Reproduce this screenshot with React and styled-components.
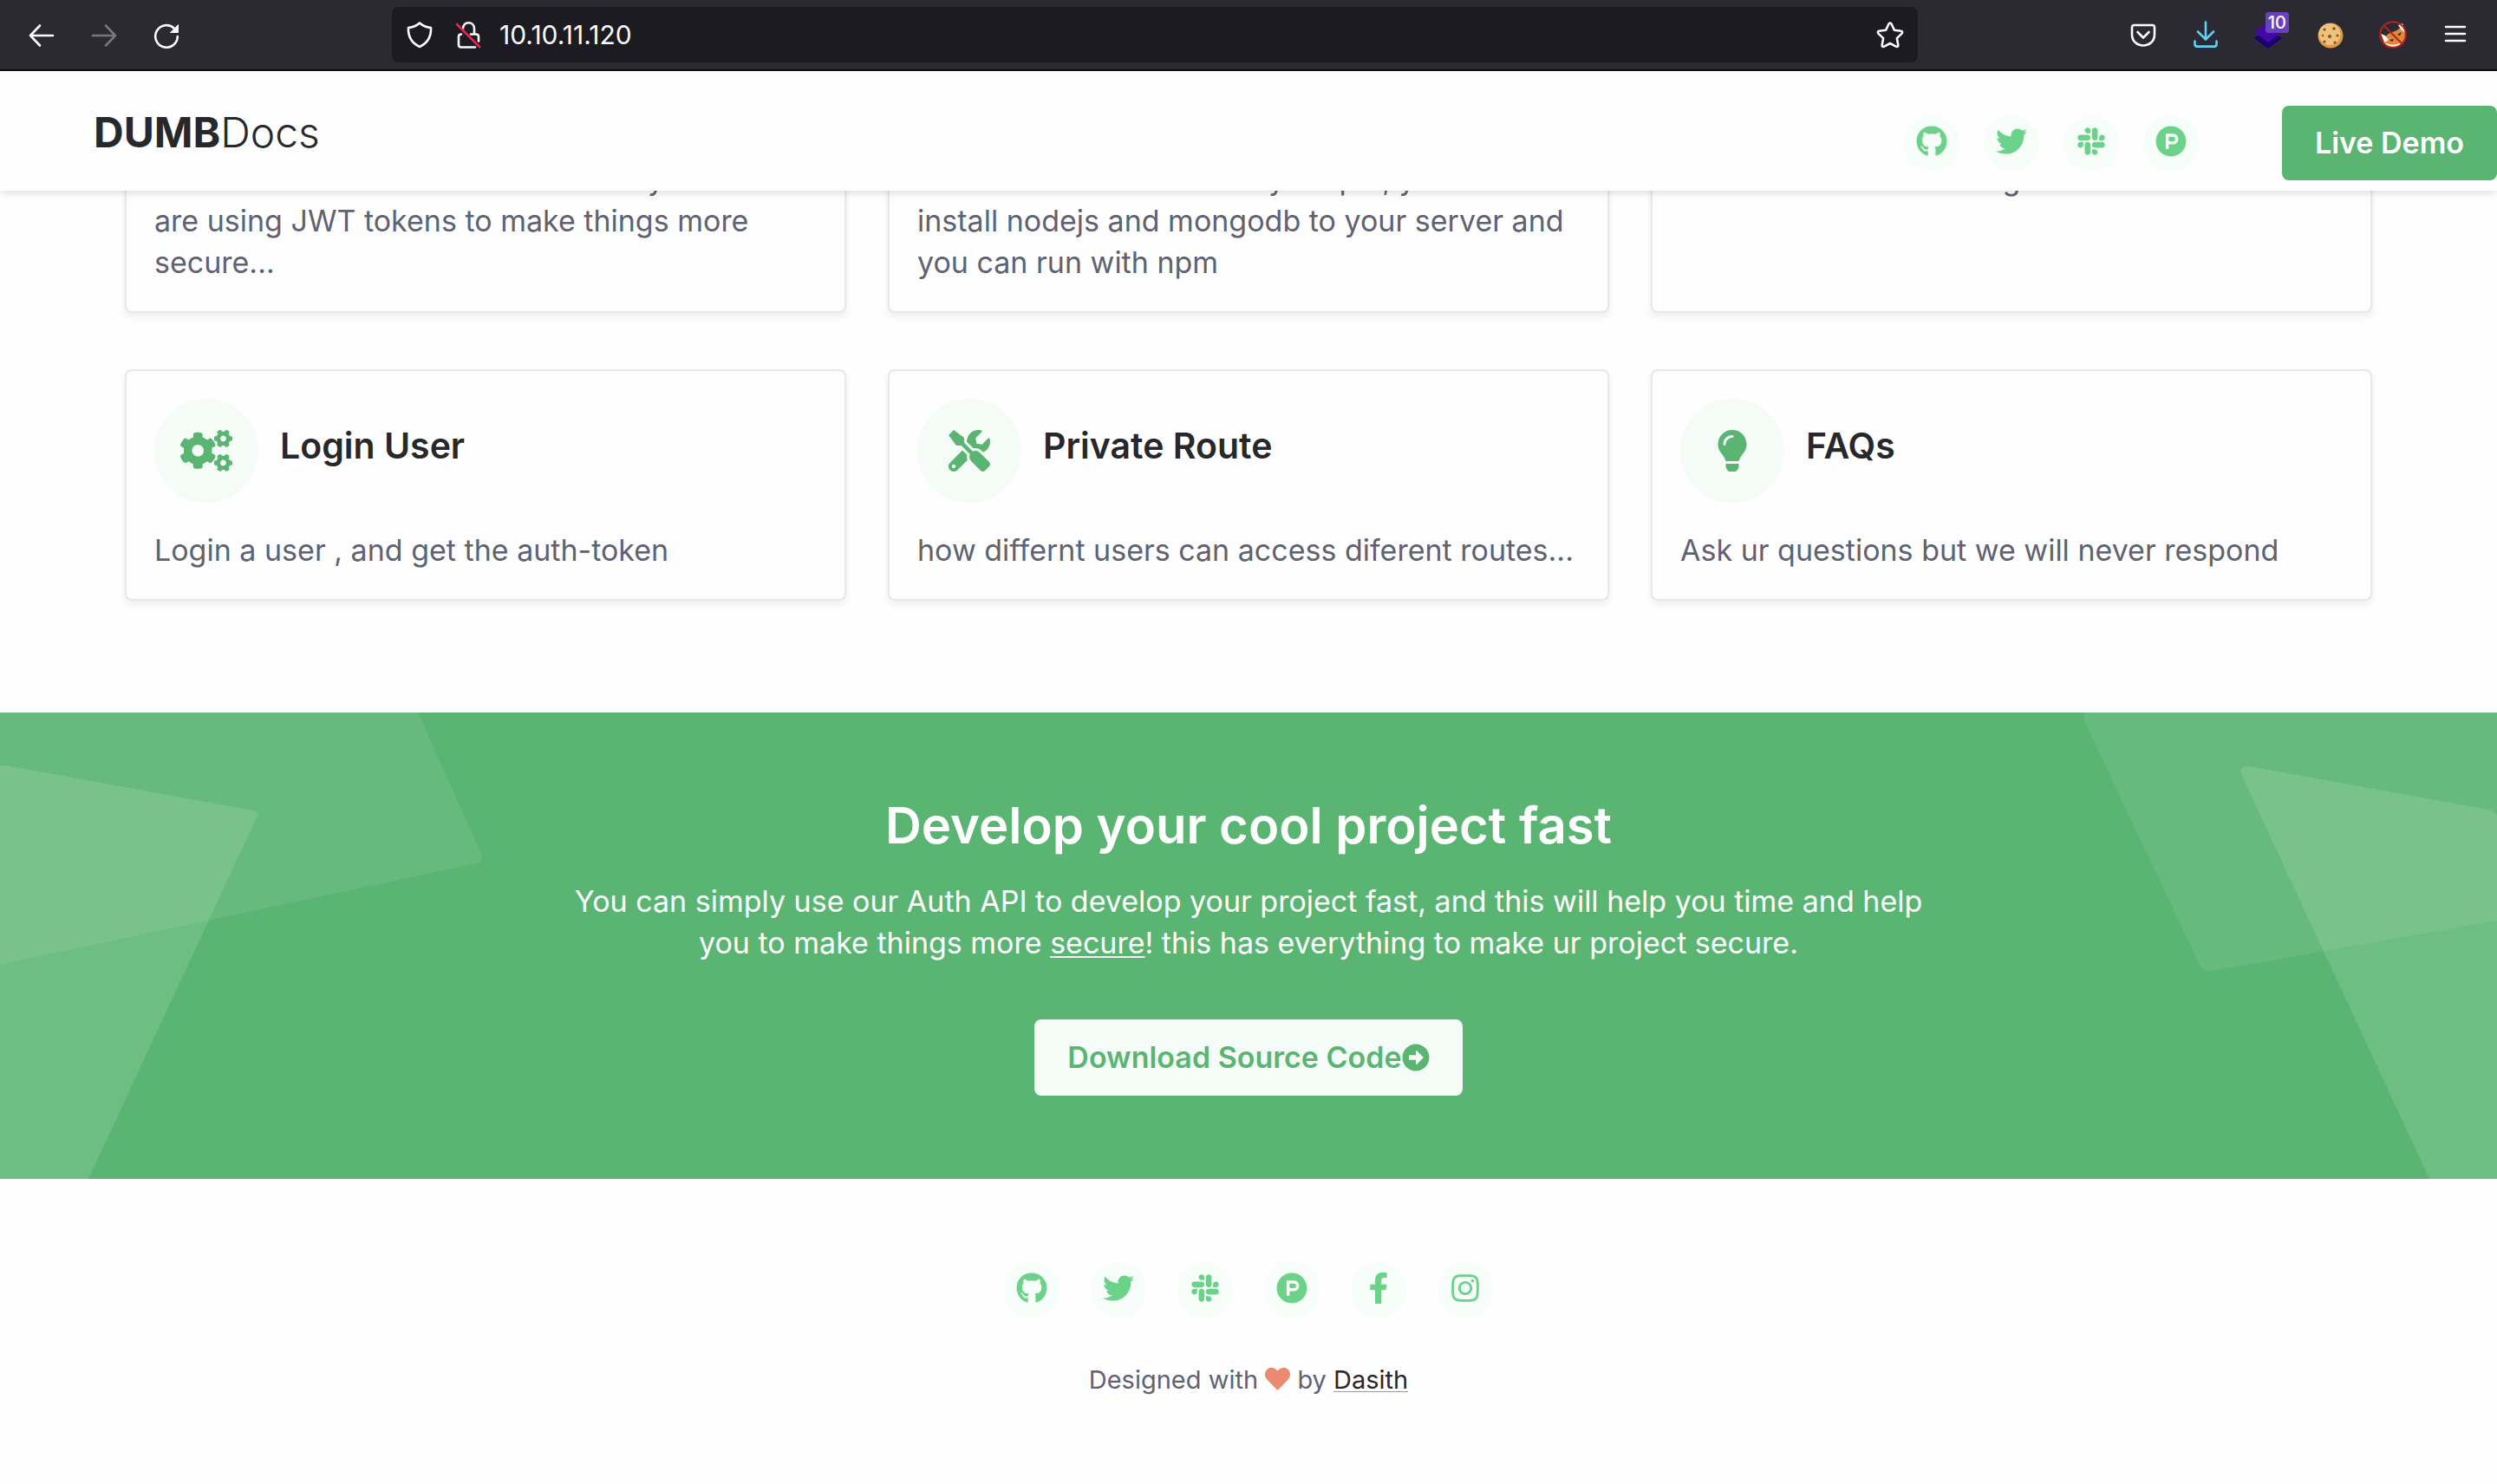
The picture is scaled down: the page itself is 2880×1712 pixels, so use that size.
import React from "react";
import styled, { createGlobalStyle } from "styled-components";
import {
  FaGithub,
  FaTwitter,
  FaSlack,
  FaProductHunt,
  FaFacebookF,
  FaInstagram,
  FaCogs,
  FaTools,
  FaLightbulb,
  FaHeart,
  FaArrowAltCircleRight,
} from "react-icons/fa";

const GlobalStyle = createGlobalStyle`
  *, *::before, *::after { box-sizing: border-box; }
  html { background: #fefefe; }
  body {
    margin: 0;
    overflow-x: hidden;
    color: #5f6271;
    background: #fefefe;
    font-family: Inter, "Open Sans", "Liberation Sans", sans-serif;
    font-size: 34px;
    line-height: 48px;
  }
  h1, h2, h3, p, ul { margin: 0; padding: 0; }
  a { color: inherit; text-decoration: none; }
  button { font: inherit; border: 0; padding: 0; background: none; cursor: pointer; }
`;

const Toolbar = styled.div`
  display: flex;
  align-items: center;
  height: 82px;
  padding: 0 12px;
  background: #2b2a33;
  border-bottom: 2px solid #0c0c0d;
`;

const ToolButton = styled.button`
  position: relative;
  display: grid;
  place-items: center;
  width: ${(p) => (p.$small ? 56 : 72)}px;
  height: 64px;
  flex: none;
  color: ${(p) => p.$tone || "#fbfbfe"};
`;

const AddressBar = styled.div`
  display: flex;
  align-items: center;
  flex: 1;
  min-width: 0;
  height: 64px;
  margin: 0 224px;
  padding: 0 4px;
  border-radius: 8px;
  background: #1c1b22;
`;

const AddressInput = styled.input`
  flex: 1;
  min-width: 0;
  padding: 0 8px;
  border: 0;
  outline: 0;
  background: transparent;
  color: #fbfbfe;
  font: 400 30px/40px Inter, sans-serif;
`;

const Badge = styled.span`
  position: absolute;
  top: 6px;
  right: 12px;
  padding: 0 3px;
  border-radius: 3px;
  background: #6a3fc0;
  color: #fff;
  font: 500 20px/24px Inter, sans-serif;
`;

const Header = styled.header`
  position: relative;
  z-index: 2;
  display: flex;
  align-items: center;
  justify-content: space-between;
  height: 138px;
  padding: 28px 0 0 108px;
  background: #fefefe;
  box-shadow: 0 2px 10px rgba(0, 0, 0, 0.14);
`;

const Logo = styled.a`
  margin-bottom: 24px;
  color: #26282b;
  font-size: 48px;
  line-height: 60px;
  font-weight: 700;
`;

const LogoLight = styled.span`
  font-weight: 300;
`;

const HeaderActions = styled.div`
  display: flex;
  align-items: center;
  gap: 96px;
`;

const SocialList = styled.ul`
  display: flex;
  gap: ${(p) => p.$gap}px;
  list-style: none;
`;

const SocialLink = styled.a`
  display: grid;
  place-items: center;
  width: 64px;
  height: 64px;
  padding-bottom: 4px;
  border-radius: 50%;
  background: #f7fdf9;
  color: #6cd28a;
  font-size: 36px;
`;

const Button = styled.a`
  display: inline-flex;
  align-items: center;
  height: ${(p) => (p.$light ? 88 : 86)}px;
  padding: 0 38px;
  border-radius: 8px;
  background: ${(p) => (p.$light ? "#f5fcf7" : "#5bb572")};
  color: ${(p) => (p.$light ? "#5bb572" : "#fff")};
  font-weight: 600;

  svg {
    width: 32px;
    height: 32px;
  }
`;

const Features = styled.main`
  display: grid;
  grid-template-columns: repeat(3, 1fr);
  gap: 65px 48px;
  margin-top: -71px;
  padding: 0 5% 129px;
`;

const Card = styled.article`
  padding: 32px;
  border: 2px solid #e8e8e9;
  border-radius: 8px;
  background: #fefefe;
  box-shadow: 0 4px 8px rgba(0, 0, 0, 0.07);
`;

const CardHead = styled.div`
  display: flex;
  align-items: center;
  gap: 25px;
  margin-bottom: 31px;
`;

const CardIcon = styled.span`
  display: grid;
  place-items: center;
  width: 120px;
  height: 120px;
  border-radius: 50%;
  background: #f5fcf7;
  color: #5bb572;
`;

const CardTitle = styled.h3`
  padding-bottom: 12px;
  color: #26282b;
  font-size: 41px;
  line-height: 48px;
  font-weight: 600;
`;

const Line = styled.span`
  display: block;
  white-space: nowrap;
`;

const Banner = styled.section`
  position: relative;
  padding: 96px 0;
  overflow: hidden;
  background: #5bb572;
  color: #fff;
  text-align: center;
`;

const Shapes = styled.svg`
  position: absolute;
  top: 0;
  ${(p) => p.$side}: 0;
`;

const BannerTitle = styled.h2`
  margin-bottom: 30px;
  font-size: 58px;
  line-height: 68px;
  font-weight: 600;
`;

const BannerText = styled.p`
  margin-bottom: 64px;
`;

const Underlined = styled.a`
  text-decoration: underline;
  text-decoration-thickness: 2px;
  text-underline-offset: 3px;
`;

const Actions = styled.div`
  display: flex;
  justify-content: center;
`;

const Footer = styled.footer`
  display: flex;
  flex-direction: column;
  align-items: center;
  gap: 50px;
  padding: 96px 0;
`;

const Credit = styled.small`
  font-size: 29px;
  line-height: 44px;
`;

const Heart = styled(FaHeart)`
  color: #ea8a70;
  vertical-align: -3px;
`;

const Author = styled.a`
  color: #26282b;
  text-decoration: underline 1px #9a9ca3;
  text-underline-offset: 3px;
`;

const Svg = ({ children, size = 32, ...rest }) => (
  <svg
    width={size}
    height={size}
    viewBox="0 0 32 32"
    fill="none"
    stroke="currentColor"
    strokeWidth="2.6"
    strokeLinecap="round"
    strokeLinejoin="round"
    aria-hidden="true"
    {...rest}
  >
    {children}
  </svg>
);

const BackIcon = () => <Svg><path d="M29 17H3.500M14 5.500 3 17l11 11.500" /></Svg>;
const ForwardIcon = () => <Svg><path d="M3 17h25.500M18 5.500 29 17 18 28.500" /></Svg>;
const ReloadIcon = () => (
  <Svg>
    <path d="M28.800 18A12.800 12.800 0 1 1 25 8.800" />
    <path d="M29.500 5v8.500H21z" fill="currentColor" strokeWidth="1" />
  </Svg>
);
const ShieldIcon = () => <Svg><path d="M16 2.500c3 2.800 8 5 13 5.500.4 9-3.500 17.500-13 22C6.500 25.500 2.600 17 3 8c5-.5 10-2.700 13-5.500z" /></Svg>;
const LockIcon = () => (
  <Svg>
    <path d="M10 9c0-4 2.600-6.800 6.500-6.800S23 5 23 9v5M8 15.500c-2 0-3 1-3 3v9c0 2 1 3 3 3h16M19 15.500h6c2 0 3 1 3 3v5" />
    <path d="M3 4l26 26" stroke="#e22850" />
  </Svg>
);
const StarIcon = () => <Svg><path d="M16 2.500c.7 0 1.200.4 1.500 1l3.400 7.300 7.700 1c1.500.2 2 1.800 1 2.800l-5.700 5.500 1.400 7.800c.3 1.500-1.200 2.500-2.500 1.800L16 26l-6.800 3.700c-1.300.7-2.800-.3-2.500-1.800l1.400-7.800-5.700-5.500c-1-1-.5-2.600 1-2.800l7.700-1 3.400-7.300c.3-.6.800-1 1.500-1z" /></Svg>;
const PocketIcon = () => (
  <Svg>
    <path d="M5.500 5h21c1.500 0 2.500 1 2.500 2.500V16c0 7.500-6 12.500-13 12.500S3 23.500 3 16V7.500C3 6 4 5 5.500 5z" />
    <path d="M9.500 13l6.500 6.500 6.500-6.500" />
  </Svg>
);
const DownloadIcon = () => <Svg><path d="M16 1.500v19M7 12.500l9 9 9-9M3.500 23.500v3.500c0 1.600 1 2.600 2.600 2.600h19.800c1.600 0 2.600-1 2.600-2.600v-3.500" /></Svg>;
const LayersIcon = () => (
  <Svg stroke="none">
    <path d="M0 20l16-11 16 11-16 12z" fill="#1c0070" />
    <path d="M16 1l16 12-16 12L0 13z" fill="#4209a6" />
  </Svg>
);
const CookieIcon = () => (
  <Svg stroke="none">
    <circle cx="16" cy="17" r="14.500" fill="#d79a45" />
    <circle cx="15" cy="15.500" r="12.500" fill="#edc27c" />
    <g fill="#8d4d1a">
      <circle cx="9" cy="10" r="1.600" /><circle cx="20" cy="9" r="1.800" />
      <circle cx="7" cy="17" r="1.200" /><circle cx="15" cy="18" r="2" />
      <circle cx="9" cy="24" r="1.600" /><circle cx="24" cy="17" r="1.500" />
      <circle cx="21" cy="25" r="1.600" />
    </g>
  </Svg>
);
const FoxIcon = () => (
  <Svg stroke="none">
    <path d="M6 26c1-5 1-9 5-11 4-3 8-2 12-6l6-2c2 7 2 14-3 19-6 5-14 5-20 0z" fill="#e0883a" />
    <path d="M22 5l5-2 4 11-5-3zM2 15l5 2 4 5-5 3zM6 25c6 3 12 4 20 0l-4 5c-6 2-12 0-16-5z" fill="#fff8ee" />
    <path d="M12 22l5-1-2 3zM21 16l5-3-2 4z" fill="#2a1710" />
    <circle cx="16" cy="16" r="14.800" stroke="#b8201c" strokeWidth="2" />
    <path d="M5.500 5.500l21 21" stroke="#b8201c" strokeWidth="2" />
  </Svg>
);
const MenuIcon = () => <Svg><path d="M5 7h22M5 15h22M5 23h22" /></Svg>;

const SOCIAL = [
  ["GitHub", FaGithub],
  ["Twitter", FaTwitter],
  ["Slack", FaSlack],
  ["Product Hunt", FaProductHunt],
  ["Facebook", FaFacebookF],
  ["Instagram", FaInstagram],
];

const INTRO = [
  ["Start here with modern auth security since we", "are using JWT tokens to make things more", "secure..."],
  ["To use the API even with your pc , you must", "install nodejs and mongodb to your server and", "you can run with npm"],
  ["See all doc sections to get started"],
];

const TOPICS = [
  { title: "Login User", icon: FaCogs, iconSize: 60, text: "Login a user , and get the auth-token" },
  { title: "Private Route", icon: FaTools, iconSize: 48, text: "how differnt users can access diferent routes..." },
  { title: "FAQs", icon: FaLightbulb, iconSize: 48, text: "Ask ur questions but we will never respond" },
];

function Socials({ count, gap }) {
  return (
    <SocialList $gap={gap}>
      {SOCIAL.slice(0, count).map(([name, Icon]) => (
        <li key={name}>
          <SocialLink href="#" aria-label={name}><Icon /></SocialLink>
        </li>
      ))}
    </SocialList>
  );
}

export default function App() {
  return (
    <>
      <GlobalStyle />
      <Toolbar>
        <ToolButton aria-label="Back"><BackIcon /></ToolButton>
        <ToolButton aria-label="Forward" $tone="#77767d"><ForwardIcon /></ToolButton>
        <ToolButton aria-label="Reload"><ReloadIcon /></ToolButton>
        <AddressBar>
          <ToolButton $small aria-label="Tracking protection"><ShieldIcon /></ToolButton>
          <ToolButton $small aria-label="Connection not secure"><LockIcon /></ToolButton>
          <AddressInput aria-label="Address" defaultValue="10.10.11.120" />
          <ToolButton $small aria-label="Bookmark"><StarIcon /></ToolButton>
        </AddressBar>
        <ToolButton aria-label="Pocket"><PocketIcon /></ToolButton>
        <ToolButton aria-label="Downloads" $tone="#5fd0f3"><DownloadIcon /></ToolButton>
        <ToolButton aria-label="Wappalyzer"><LayersIcon /><Badge>10</Badge></ToolButton>
        <ToolButton aria-label="Cookies"><CookieIcon /></ToolButton>
        <ToolButton aria-label="Proxy"><FoxIcon /></ToolButton>
        <ToolButton aria-label="Menu"><MenuIcon /></ToolButton>
      </Toolbar>

      <Header>
        <Logo href="#">DUMB<LogoLight>Docs</LogoLight></Logo>
        <HeaderActions>
          <Socials count={4} gap={28} />
          <Button href="#">Live Demo</Button>
        </HeaderActions>
      </Header>

      <Features>
        {INTRO.map((lines) => (
          <Card key={lines[0]}>
            <p>{lines.map((line) => <Line key={line}>{line}</Line>)}</p>
          </Card>
        ))}
        {TOPICS.map(({ title, icon: Icon, iconSize, text }) => (
          <Card key={title}>
            <CardHead>
              <CardIcon><Icon size={iconSize} /></CardIcon>
              <CardTitle>{title}</CardTitle>
            </CardHead>
            <p>{text}</p>
          </Card>
        ))}
      </Features>

      <Banner>
        <Shapes $side="left" width="560" height="538" viewBox="0 0 560 538" aria-hidden="true">
          <path d="M0 0H482L555 163Q558 171 549 174L0 291Z" fill="#fff" fillOpacity="0.08" />
          <path d="M0 62Q4 60 12 62L292 113Q299 115 296 121L102 538H0Z" fill="#fff" fillOpacity="0.12" />
        </Shapes>
        <Shapes $side="right" width="480" height="538" viewBox="0 0 480 538" aria-hidden="true">
          <path d="M4 0H480V240L152 298Q142 300 138 293L4 10Z" fill="#fff" fillOpacity="0.08" />
          <path d="M185 71Q182 62 194 62L470 112Q476 113 480 119V538H402Z" fill="#fff" fillOpacity="0.12" />
        </Shapes>
        <BannerTitle>Develop your cool project fast</BannerTitle>
        <BannerText>
          <Line>You can simply use our Auth API to develop your project fast, and this will help you time and help</Line>
          <Line>you to make things more <Underlined href="#">secure</Underlined>! this has everything to make ur project secure.</Line>
        </BannerText>
        <Actions>
          <Button href="#" $light>Download Source Code<FaArrowAltCircleRight /></Button>
        </Actions>
      </Banner>

      <Footer>
        <Socials count={6} gap={36} />
        <Credit>Designed with <Heart /> by <Author href="#">Dasith</Author></Credit>
      </Footer>
    </>
  );
}
